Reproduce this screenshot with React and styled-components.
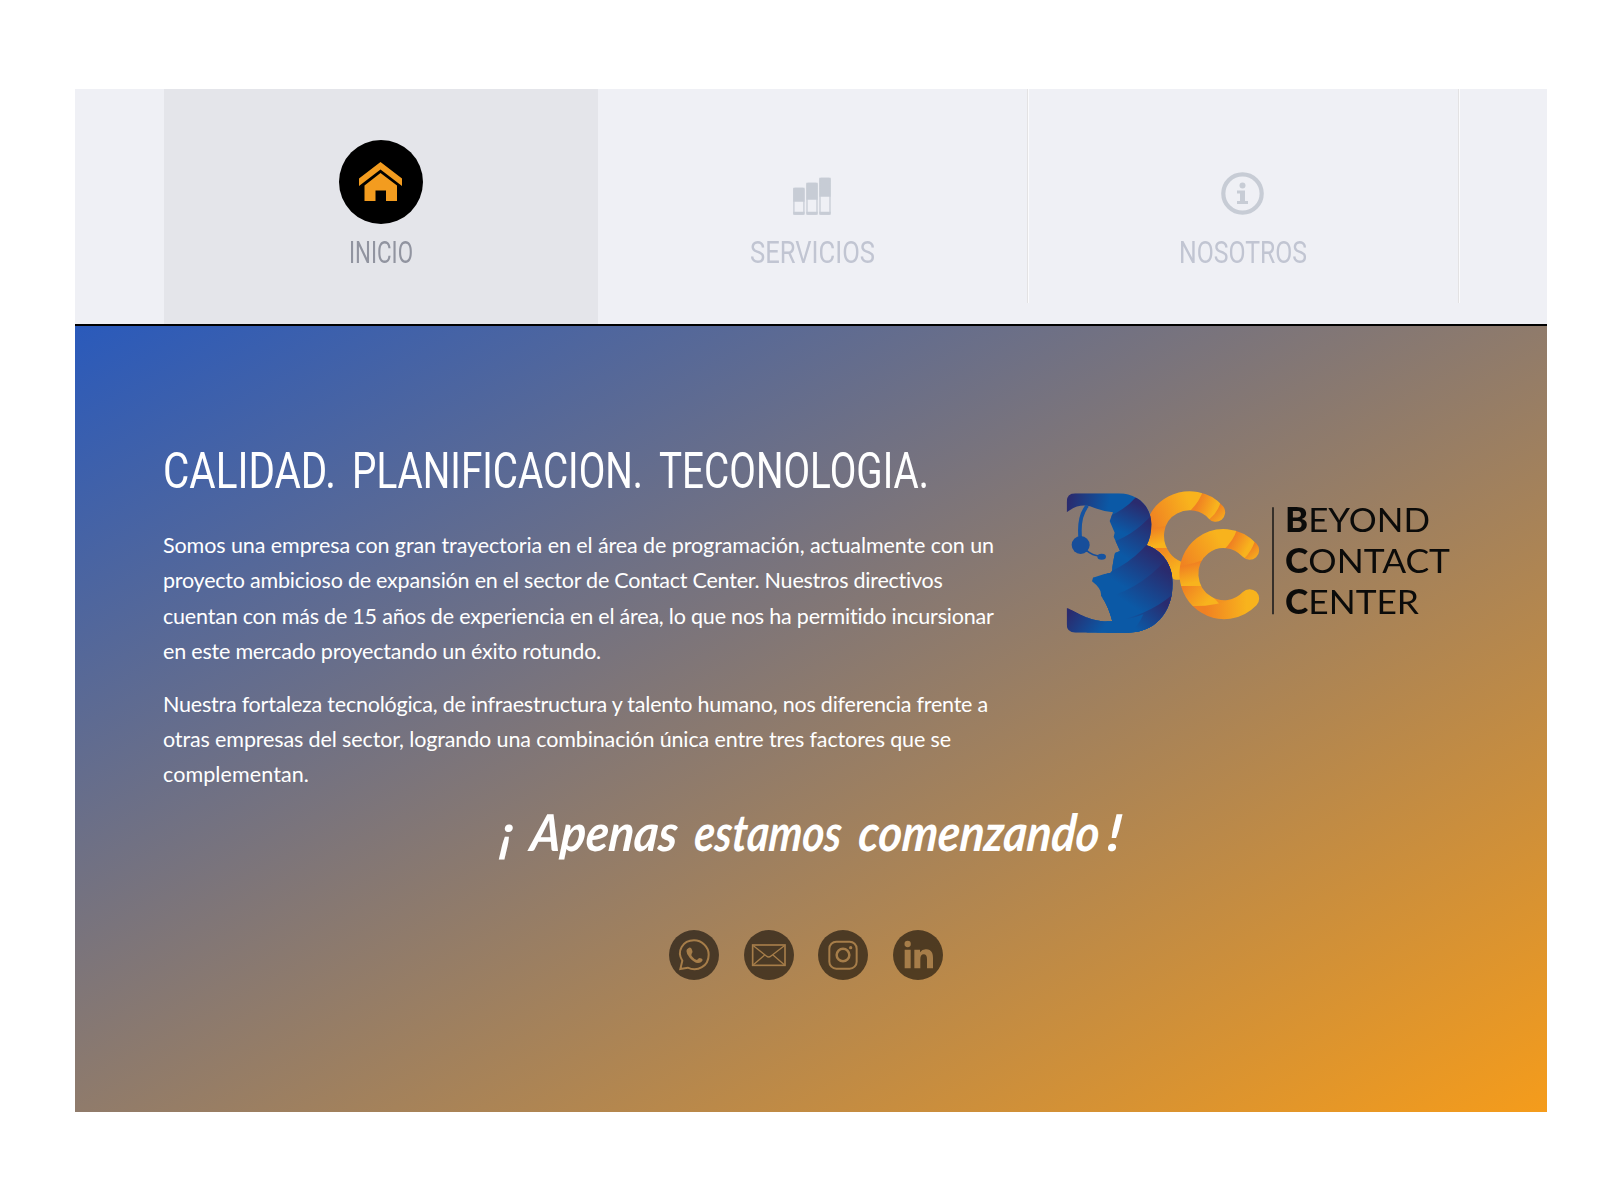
import React, { useLayoutEffect, useRef, useState } from "react";
import styled, { createGlobalStyle } from "styled-components";

const GlobalStyle = createGlobalStyle`
  *, *::before, *::after { box-sizing: border-box; }
  body { margin: 0; background: #fff; }
`;

const Page = styled.div`
  width: 1623px;
  height: 1201px;
  padding: 89px 76px 0 75px;
  overflow: hidden;
  font-family: Lato, "Open Sans", sans-serif;
`;

const Site = styled.div`
  display: flex;
  flex-direction: column;
  width: 1472px;
  height: 1023px;
`;

const Nav = styled.nav`
  display: flex;
  align-items: stretch;
  height: 237px;
  padding-left: 89px;
  background: #eff0f5;
  border-bottom: 2px solid #000;
`;

const Tab = styled.a`
  display: flex;
  flex-direction: column;
  align-items: center;
  width: ${(p) => (p.$active ? 433.5 : 430.5)}px;
  height: ${(p) => (p.$active ? 235 : 214)}px;
  padding-top: 51px;
  background: ${(p) => (p.$active ? "#e4e5ea" : "transparent")};
  color: ${(p) => (p.$active ? "#9194a0" : "#c1c5d2")};
  border-right: ${(p) => (p.$divided ? "1px solid #e3e2e3" : "0")};
  box-shadow: ${(p) => (p.$divided ? "1px 0 0 #fbfbfd" : "none")};
  text-decoration: none;
`;

const TabIcon = styled.span`
  display: flex;
  align-items: center;
  justify-content: center;
  width: 84px;
  height: 84px;
  padding-top: ${(p) => p.$drop}px;
  border-radius: 50%;
  background: ${(p) => (p.$active ? "#000" : "transparent")};
  color: ${(p) => (p.$active ? "#f39c1f" : "#c7ccd5")};
  svg { display: block; }
`;

const TabLabel = styled.span`
  margin-top: 11px;
  font: 400 31.5px/36px Roboto, sans-serif;
`;

const Hero = styled.main`
  display: flex;
  flex-direction: column;
  flex: 1;
  padding: 120px 89px 0;
  background: linear-gradient(to bottom right, #2a5abb, #f59c1b);
  color: #fff;
`;

const Intro = styled.section`
  display: flex;
  justify-content: space-between;
  height: 350px;
`;

const Copy = styled.div`
  width: 840px;
`;

const Title = styled.h1`
  display: flex;
  gap: 16px;
  margin: 0 0 32px -1px;
  font: 400 50px/50px Roboto, sans-serif;
`;

const Paragraph = styled.p`
  margin: 0 0 17px -1px;
  font: 400 21.5px/35.4px Lato, sans-serif;
`;

const Brand = styled.div`
  display: flex;
  padding: 44px 0 0 5px;
  width: 398px;
  svg { flex: none; display: block; }
`;

const BrandWords = styled.div`
  padding: 9px 0 0 10px;
  font: 400 33.3px/41.2px Lato, sans-serif;
  color: #0b0b0a;
  b { font-weight: 900; }
`;

const Tagline = styled.p`
  display: flex;
  gap: 17px;
  margin: 4px 0 0 337px;
  font: italic 700 51px/64px Lato, sans-serif;
`;

const Exclamation = styled.span`
  margin-left: -9px;
`;

const Social = styled.div`
  display: flex;
  gap: 24.5px;
  margin: 66px 0 0 505px;
`;

const SocialLink = styled.a`
  display: block;
  width: 50px;
  height: 50px;
  border-radius: 50%;
  background: rgba(0, 0, 0, 0.56);
  color: #a67d49;
  svg { display: block; }
`;

const FitBox = styled.span`
  display: block;
  flex: none;
  white-space: nowrap;
`;

const FitInner = styled.span`
  display: inline-block;
  transform-origin: 0 50%;
`;

/* Text set to an exact measure, either by tracking or by condensing. */
function Fit({ width, spacing, skew = 0, children }) {
  const ref = useRef(null);
  const [style, setStyle] = useState({});
  useLayoutEffect(() => {
    const natural = ref.current.getBoundingClientRect().width;
    const count = ref.current.textContent.length;
    setStyle(
      spacing
        ? { letterSpacing: `${(width - natural) / count}px` }
        : { transform: `scaleX(${width / natural}) skewX(${skew}deg)` }
    );
  }, [width, spacing, skew]);
  return (
    <FitBox style={{ width }}>
      <FitInner ref={ref} style={style}>{children}</FitInner>
    </FitBox>
  );
}

const HomeIcon = () => (
  <svg width="43" height="40" viewBox="0 0 43 40" fill="currentColor">
    <path d="M21.5 0 43 16.5V24L21.5 7.5 0 24v-7.5z" />
    <path d="M21.5 11 38 23.5V39H27V28.5H16.5V39H5.500V23.500z" />
  </svg>
);

const BarsIcon = () => (
  <svg width="38" height="38" viewBox="0 0 38 38" fill="none" stroke="currentColor" strokeWidth="1.3">
    <rect x=".9" y="11.500" width="10" height="25.500" rx="1" />
    <rect x="14" y="6.500" width="10" height="30.500" rx="1" />
    <rect x="27" y="1.500" width="10" height="35.500" rx="1" />
    <path fill="currentColor" d="M.9 11.500h10V24H.9zM14 6.500h10V22H14zM27 1.500h10V19H27zM.9 35.500h10V37H.9zM14 35.500h10V37H14zM27 35.500h10V37H27z" />
  </svg>
);

const InfoIcon = () => (
  <svg width="43" height="43" viewBox="0 0 43 43" fill="currentColor">
    <circle cx="21.500" cy="21.500" r="19.200" fill="none" stroke="currentColor" strokeWidth="4.200" />
    <circle cx="21.500" cy="13.500" r="3" />
    <path d="M16 18.500h8v10.500h3v3H16v-3h3v-7.500h-3z" />
  </svg>
);

const blueBands = [
  { d: "M45 35H400V110H45Z", from: [55, 60], to: [175, 85] },
  { d: "M170 112Q225 90 256 53L400 -20V470H170Z", from: [262, 70], to: [222, 160] },
  { d: "M170 191Q245 172 306 104L400 60V470H170Z", from: [296, 125], to: [230, 235] },
  { d: "M110 297Q218 277 294 190L400 120V470H110Z", from: [300, 210], to: [228, 325] },
  { d: "M140 359Q260 338 350 238L400 190V470H140Z", from: [338, 265], to: [255, 385] },
  { d: "M170 428Q290 411 372 340L400 330V470H170Z", from: [340, 365], to: [262, 450] },
  { d: "M45 375Q105 421 190 424Q240 419 280 403Q262 450 220 465H45Z", from: [60, 395], to: [150, 460] },
];

const upperBands = [
  { d: "M280 20H540V300H280Z", from: [300, 120], to: [420, 70] },
  { d: "M460 30Q447 70 412 100V130H540V30Z", from: [440, 75], to: [492, 95] },
  { d: "M512 66Q503 98 478 118L500 140H540V66Z", from: [500, 85], to: [530, 115] },
  { d: "M280 147Q315 142 356 137V310H280Z", from: [310, 145], to: [325, 195] },
  { d: "M280 204H400V310H280Z", from: [325, 200], to: [370, 275] },
];

const lowerBands = [
  { d: "M330 140H650V430H330Z", from: [390, 250], to: [510, 180] },
  { d: "M562 145Q550 185 518 212L560 260H650V145Z", from: [545, 185], to: [590, 210] },
  { d: "M615 182Q605 213 582 236L600 260H650V182Z", from: [605, 200], to: [630, 230] },
  { d: "M330 262Q400 263 460 240V430H330Z", from: [400, 258], to: [415, 312] },
  { d: "M330 318H460L560 430H330Z", from: [400, 320], to: [465, 375] },
  { d: "M420 378Q490 381 550 357L600 310H650V430H420Z", from: [465, 378], to: [590, 375] },
];

const Bands = ({ id, bands, dark, light }) =>
  bands.map(({ d, from, to }, i) => (
    <React.Fragment key={i}>
      <linearGradient id={id + i} gradientUnits="userSpaceOnUse" x1={from[0]} y1={from[1]} x2={to[0]} y2={to[1]}>
        <stop offset="0" stopColor={dark} />
        <stop offset="1" stopColor={light} />
      </linearGradient>
      <path d={d} fill={`url(#${id + i})`} />
    </React.Fragment>
  ));

const Logo = () => (
  <svg width="210" height="145" viewBox="45 30 630 435">
    <defs>
      <clipPath id="bShape">
        <path d="M50 97V66Q50 40 76 40H205C266 40 304 82 304 133Q304 170 290 196C337 211 368 255 368 310C368 400 312 458 235 458H76Q50 458 50 432V384C80 393 121 430 187 424Q176 379 153 347Q156 327 126 304L134 275Q163 284 178 280Q188 277 187 262L191 238L195 219L210 213L191 170L194 158L179 123L189 97Q157 94 120 79Q84 70 50 97Z" />
      </clipPath>
      <mask id="upperArc" maskUnits="userSpaceOnUse" x="280" y="20" width="380" height="420">
        <path fill="none" stroke="#fff" strokeWidth="57" strokeLinecap="round" d="M497 97C468 61 412 52 368 75C307 107 298 186 338 238Q356 261 382 271" />
      </mask>
      <mask id="lowerArc" maskUnits="userSpaceOnUse" x="280" y="20" width="380" height="420">
        <path fill="none" stroke="#fff" strokeWidth="57" strokeLinecap="round" d="M599 211C560 169 500 165 458 197C397 244 406 337 469 374C512 400 564 392 599 356" />
      </mask>
    </defs>
    <g mask="url(#upperArc)"><Bands id="up" bands={upperBands} dark="#f08122" light="#f8b31d" /></g>
    <g mask="url(#lowerArc)"><Bands id="low" bands={lowerBands} dark="#f08122" light="#f8b31d" /></g>
    <g clipPath="url(#bShape)"><Bands id="blue" bands={blueBands} dark="#2a2b6e" light="#0b59a6" /></g>
    <path d="M112 77Q84 110 91 177" fill="none" stroke="#1553a1" strokeWidth="11" />
    <circle cx="92" cy="195" r="27" fill="#174e9a" />
    <path d="M109 211Q128 227 149 228" fill="none" stroke="#174e9a" strokeWidth="5" />
    <ellipse cx="155" cy="230" rx="13" ry="9" fill="#1553a1" />
    <path d="M669 82V403" stroke="#36302a" strokeWidth="6" />
  </svg>
);

const WhatsappIcon = () => (
  <svg width="50" height="50" viewBox="0 0 150 150" fill="none" stroke="currentColor">
    <path strokeWidth="6" d="M34 117 40 92C22 64 41 31 75 31C98 31 119 50 119 74C119 108 86 127 56 113Z" />
    <path fill="currentColor" stroke="none" d="M60 53Q66 51 69 59Q73 67 68 71Q65 75 70 80Q77 89 84 90Q89 84 92 84Q101 86 101 90Q98 99 87 99Q75 98 62 83Q43 60 60 53Z" />
  </svg>
);

const MailIcon = () => (
  <svg width="50" height="50" viewBox="0 0 150 150" fill="none" stroke="currentColor" strokeWidth="4">
    <rect x="26" y="45" width="97" height="61" strokeWidth="5" />
    <path d="M28 47 67 78Q74 84 81 78L121 47M28 104 62 75M121 104 87 75" />
  </svg>
);

const InstagramIcon = () => (
  <svg width="50" height="50" viewBox="0 0 150 150" fill="none" stroke="currentColor">
    <rect x="34" y="35" width="82" height="81" rx="21" strokeWidth="6" />
    <circle cx="75" cy="75" r="19" strokeWidth="7.5" />
    <circle cx="98" cy="53" r="5" fill="currentColor" stroke="none" />
  </svg>
);

const LinkedinIcon = () => (
  <svg width="50" height="50" viewBox="0 0 150 150" fill="currentColor">
    <circle cx="44" cy="42" r="9.500" />
    <path d="M35 59H53V115H35zM64 59H81V67Q88 57 100 58C116 59 120 70 120 84V115H102V88Q102 73 92 73Q82 73 82 88V115H64z" />
  </svg>
);

const tabs = [
  { label: "INICIO", width: 64, active: true, drop: 0, Icon: HomeIcon },
  { label: "SERVICIOS", width: 125, divided: true, drop: 27, Icon: BarsIcon },
  { label: "NOSOTROS", width: 128, divided: true, drop: 22, Icon: InfoIcon },
];

const paragraphs = [
  [
    ["Somos una empresa con gran trayectoria en el área de programación, actualmente con un", 831],
    ["proyecto ambicioso de expansión en el sector de Contact Center. Nuestros directivos", 780],
    ["cuentan con más de 15 años de experiencia en el área, lo que nos ha permitido incursionar", 831],
    ["en este mercado proyectando un éxito rotundo.", 438],
  ],
  [
    ["Nuestra fortaleza tecnológica, de infraestructura y talento humano, nos diferencia frente a", 825],
    ["otras empresas del sector, logrando una combinación única entre tres factores que se", 788],
    ["complementan.", 146],
  ],
];

const brandWords = [["BEYOND", 145], ["CONTACT", 165], ["CENTER", 134]];

export default function App() {
  return (
    <Page>
      <GlobalStyle />
      <Site>
        <Nav>
          {tabs.map(({ label, width, active, divided, drop, Icon }) => (
            <Tab key={label} $active={active} $divided={divided}>
              <TabIcon $active={active} $drop={drop}><Icon /></TabIcon>
              <TabLabel><Fit width={width}>{label}</Fit></TabLabel>
            </Tab>
          ))}
        </Nav>
        <Hero>
          <Intro>
            <Copy>
              <Title>
                <Fit width={173}>CALIDAD.</Fit>
                <Fit width={291}>PLANIFICACION.</Fit>
                <Fit width={270}>TECONOLOGIA.</Fit>
              </Title>
              {paragraphs.map((lines, i) => (
                <Paragraph key={i}>
                  {lines.map(([text, width]) => (
                    <Fit key={text} width={width} spacing>{text}</Fit>
                  ))}
                </Paragraph>
              ))}
            </Copy>
            <Brand>
              <Logo />
              <BrandWords>
                {brandWords.map(([word, width]) => (
                  <Fit key={word} width={width}><b>{word[0]}</b>{word.slice(1)}</Fit>
                ))}
              </BrandWords>
            </Brand>
          </Intro>
          <Tagline>
            <Fit width={13} skew={-6}>¡</Fit>
            <Fit width={147} skew={-6}>Apenas</Fit>
            <Fit width={147} skew={-6}>estamos</Fit>
            <Fit width={241} skew={-6}>comenzando</Fit>
            <Exclamation><Fit width={14} skew={-6}>!</Fit></Exclamation>
          </Tagline>
          <Social>
            {[WhatsappIcon, MailIcon, InstagramIcon, LinkedinIcon].map((Icon, i) => (
              <SocialLink key={i}><Icon /></SocialLink>
            ))}
          </Social>
        </Hero>
      </Site>
    </Page>
  );
}
